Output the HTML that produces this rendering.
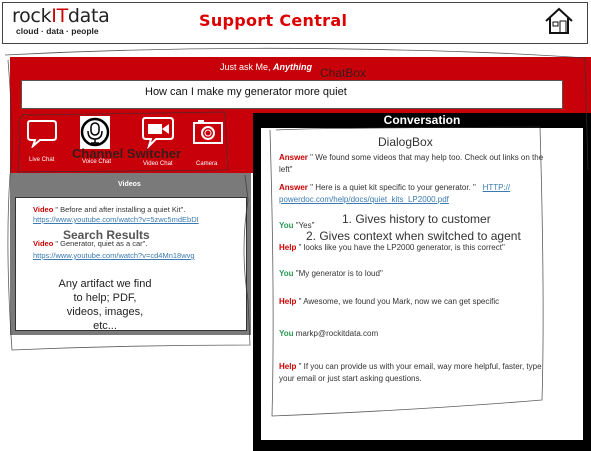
<!DOCTYPE html>
<html><head><style>
body{margin:0;width:591px;height:451px;background:#fff;position:relative;overflow:hidden;font-family:"Liberation Sans",sans-serif}
.a{position:absolute}
.lbl{color:#c00;font-weight:bold}
.you{color:#2a9a55;font-weight:bold}
.m{font-size:8px;color:#333;line-height:12px}
.lnk{color:#3a7ab0;text-decoration:underline}
</style></head><body>
<div class="a" style="left:2px;top:2px;width:584px;height:40px;border:1px solid #444"></div>
<div class="a" style="left:12px;top:5px;font-size:19px;color:#222;letter-spacing:-0.3px;font-family:'DejaVu Sans',sans-serif">rock<span style="color:#c00">IT</span>data</div>
<div class="a" style="left:16px;top:26px;font-size:8.5px;color:#222;font-weight:bold">cloud · data · people</div>
<div class="a" style="left:199px;top:11px;font-size:16px;color:#d00;font-weight:bold;font-family:'DejaVu Sans',sans-serif;letter-spacing:0.3px">Support Central</div>
<svg class="a" style="left:544px;top:7px" width="30" height="28"><path d="M2 14 L15 2 L28 14 M6 11 V26 H24 V11" fill="none" stroke="#111" stroke-width="2"/><rect x="9" y="15" width="5" height="4" fill="none" stroke="#111"/><rect x="16" y="14" width="6" height="12" fill="none" stroke="#111"/></svg>
<div class="a" style="left:10px;top:57px;width:581px;height:116px;background:#c8000a"></div>
<div class="a" style="left:220px;top:62px;font-size:9px;color:#fff">Just ask Me, <b><i>Anything</i></b></div>
<div class="a" style="left:320px;top:66px;font-size:12px;color:#3a1a1a">ChatBox</div>
<div class="a" style="left:21px;top:80px;width:540px;height:27px;background:#fff;border:1px solid #555"></div>
<div class="a" style="left:145px;top:86px;font-size:11px;color:#111">How can I make my generator more quiet</div>
<svg class="a" style="left:26px;top:118px" width="32" height="30"><path d="M4 3 H27 Q30 3 30 6 V19 Q30 22 27 22 H14 L7 28 L9 22 H5 Q2 22 2 19 V6 Q2 3 4 3 Z" fill="none" stroke="#fff" stroke-width="2"/></svg>
<div class="a" style="left:29px;top:157px;font-size:6px;color:#fff">Live Chat</div>
<div class="a" style="left:80px;top:116px;width:30px;height:33px;background:#fff"></div>
<svg class="a" style="left:80px;top:116px" width="30" height="33"><circle cx="15" cy="16" r="13" fill="none" stroke="#000" stroke-width="2.5"/><rect x="11" y="7" width="8" height="12" rx="4" fill="none" stroke="#000" stroke-width="1.5"/><path d="M8 15 Q8 23 15 23 Q22 23 22 15 M15 23 V27 M11 27 H19" fill="none" stroke="#000" stroke-width="1.5"/></svg>
<div class="a" style="left:82px;top:159px;font-size:6px;color:#fff">Voice Chat</div>
<div class="a" style="left:72px;top:146px;font-size:13px;color:#3a1a1a;font-weight:bold">Channel Switcher</div>
<svg class="a" style="left:141px;top:116px" width="34" height="33"><path d="M4 2 H29 Q32 2 32 5 V20 Q32 23 29 23 H15 L8 30 L10 23 H5 Q2 23 2 20 V5 Q2 2 4 2 Z" fill="none" stroke="#fff" stroke-width="2"/><rect x="7" y="8" width="14" height="10" fill="#fff"/><path d="M21 13 L28 8 V18 Z" fill="#fff"/></svg>
<div class="a" style="left:143px;top:161px;font-size:6px;color:#fff">Video Chat</div>
<svg class="a" style="left:192px;top:119px" width="32" height="26"><rect x="2" y="4" width="28" height="20" fill="none" stroke="#fff" stroke-width="2"/><circle cx="16" cy="14" r="6" fill="none" stroke="#fff" stroke-width="2"/><circle cx="16" cy="14" r="3" fill="none" stroke="#fff"/><rect x="6" y="1" width="6" height="3" fill="#fff"/></svg>
<div class="a" style="left:196px;top:161px;font-size:6px;color:#fff">Camera</div>
<div class="a" style="left:10px;top:173px;width:241px;height:162px;background:#7a7a7a"></div>
<div class="a" style="left:118px;top:181px;font-size:7px;color:#fff;font-weight:bold">Videos</div>
<div class="a" style="left:15px;top:197px;width:230px;height:132px;background:#fff;border:1px solid #333"></div>
<div class="a m" style="left:33px;top:205px;width:210px;line-height:10px;font-size:7.5px"><span class="lbl">Video</span> " Before and after installing a quiet Kit".<br><span class="lnk">https://www.youtube.com/watch?v=5zwc5mdEbDI</span></div>
<div class="a" style="left:63px;top:228px;font-size:12px;color:#555;font-weight:bold">Search Results</div>
<div class="a m" style="left:33px;top:238px;width:210px;line-height:12px;font-size:7.5px"><span class="lbl">Video</span> " Generator, quiet as a car".<br><span class="lnk">https://www.youtube.com/watch?v=cd4Mn18wvg</span></div>
<div class="a" style="left:50px;top:277px;width:110px;text-align:center;font-size:11px;color:#222;line-height:14px">Any artifact we find<br>to help; PDF,<br>videos, images,<br>etc...</div>
<div class="a" style="left:253px;top:113px;width:338px;height:338px;background:#000"></div>
<div class="a" style="left:253px;top:113px;width:338px;text-align:center;font-size:12px;color:#fff;font-weight:bold">Conversation</div>
<div class="a" style="left:261px;top:128px;width:322px;height:312px;background:#fff"></div>
<div class="a" style="left:378px;top:135px;font-size:12px;color:#333">DialogBox</div>
<div class="a m" style="left:279px;top:152px;width:270px"><span class="lbl">Answer</span> " We found some videos that may help too. Check out links on the left"</div>
<div class="a m" style="left:279px;top:182px;width:270px"><span class="lbl">Answer</span> " Here is a quiet kit specific to your generator. "&nbsp;&nbsp; <span class="lnk">HTTP:// powerdoc.com/help/docs/quiet_kits_LP2000.pdf</span></div>
<div class="a m" style="left:279px;top:220px"><span class="you">You</span> "Yes"</div>
<div class="a" style="left:342px;top:212px;font-size:12px;color:#333">1. Gives history to customer</div>
<div class="a" style="left:306px;top:229px;font-size:12px;color:#333">2. Gives context when switched to agent</div>
<div class="a m" style="left:279px;top:242px"><span class="lbl">Help</span> " looks like you have the LP2000 generator, is this correct"</div>
<div class="a m" style="left:279px;top:268px"><span class="you">You</span> "My generator is to loud"</div>
<div class="a m" style="left:279px;top:296px"><span class="lbl">Help</span> " Awesome, we found you Mark, now we can get specific</div>
<div class="a m" style="left:279px;top:328px"><span class="you">You</span> markp@rockitdata.com</div>
<div class="a m" style="left:279px;top:361px;width:280px"><span class="lbl">Help</span> " If you can provide us with your email, way more helpful, faster, type your email or just start asking questions.</div>
<svg class="a" style="left:0;top:0" width="591" height="451"><g fill="none" stroke="#333" stroke-width="0.8" opacity="0.8">
<path d="M5 55 Q200 45 400 50 Q500 52 585 58 L588 170"/>
<path d="M8 60 Q15 150 10 175 Q5 250 12 350 Q130 345 250 345 L248 300 Q240 250 248 200 L245 175"/>
<path d="M276 130 Q300 128 540 127 Q545 300 542 400 Q420 410 272 416 Q275 300 270 130"/>
<path d="M20 140 Q15 110 30 115 L225 112 L228 170 L18 172 Z"/>
</g></svg>
</body></html>
